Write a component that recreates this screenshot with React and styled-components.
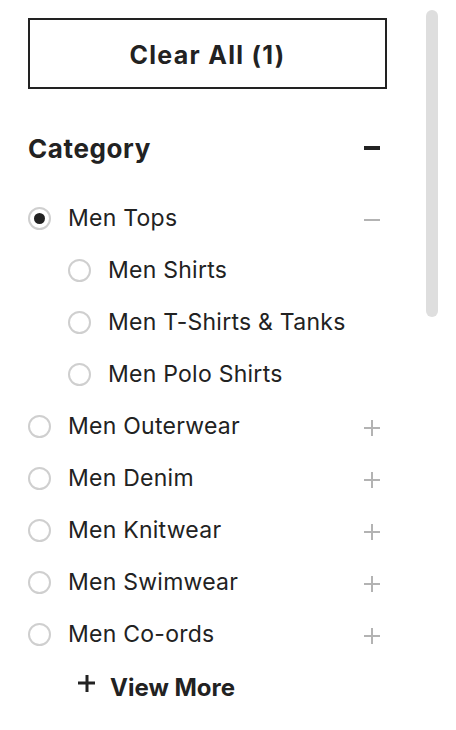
import React from "react";
import styled, { createGlobalStyle } from "styled-components";

const Global = createGlobalStyle`
  html, body { margin: 0; padding: 0; background: #fff; }
  body { font-family: "Inter", "Noto Sans", sans-serif; color: #222; }
`;

const Page = styled.div`
  display: flex;
  align-items: flex-start;
  padding-left: 28px;
  width: 456px;
  height: 730px;
  box-sizing: border-box;
  overflow: hidden;
`;

const Panel = styled.div`
  width: 359px;
  display: flex;
  flex-direction: column;
  padding-top: 18px;
`;

const ScrollThumb = styled.div`
  width: 12px;
  height: 307px;
  margin-top: 10px;
  margin-left: 39px;
  border-radius: 6px;
  background: #dedede;
`;

const ClearButton = styled.button`
  height: 71px;
  width: 100%;
  box-sizing: border-box;
  border: 2px solid #222;
  background: #fff;
  font-family: inherit;
  font-weight: 700;
  font-size: 25px;
  letter-spacing: 1.3px;
  color: #222;
  cursor: pointer;
  padding: 3px 0 0;
`;

const Header = styled.div`
  display: flex;
  align-items: center;
  justify-content: space-between;
  height: 52px;
  margin-top: 33px;
  margin-bottom: 18px;
`;

const HeaderTitle = styled.h2`
  margin: 0;
  font-size: 26px;
  font-weight: 700;
  letter-spacing: 0.6px;
  color: #222;
`;

const Row = styled.div`
  display: flex;
  align-items: center;
  height: 52px;
  padding-left: ${(p) => (p.$sub ? 40 : 0)}px;
`;

const Radio = styled.span`
  width: 23px;
  height: 23px;
  box-sizing: border-box;
  border-radius: 50%;
  border: 2px solid #cfcfcf;
  display: flex;
  align-items: center;
  justify-content: center;
  flex-shrink: 0;
  &::after {
    content: "";
    width: 11px;
    height: 11px;
    border-radius: 50%;
    background: ${(p) => (p.$checked ? "#222" : "transparent")};
  }
`;

const Label = styled.span`
  flex: 1;
  margin-left: 17px;
  font-size: 23px;
  letter-spacing: 0.25px;
  color: #222;
`;

const Toggle = styled.span`
  position: relative;
  width: ${(p) => p.$size || 16}px;
  height: ${(p) => p.$size || 16}px;
  margin-right: ${(p) => (p.$right === undefined ? 7 : p.$right)}px;
  margin-top: ${(p) => p.$offset || 0}px;
  flex-shrink: 0;
  &::before, &::after {
    content: "";
    position: absolute;
    background: ${(p) => p.$color};
  }
  &::before {
    left: 0;
    right: 0;
    top: 50%;
    height: ${(p) => p.$thick}px;
    transform: translateY(-50%);
  }
  &::after {
    display: ${(p) => (p.$plus ? "block" : "none")};
    top: 0;
    bottom: 0;
    left: 50%;
    width: ${(p) => p.$thick}px;
    transform: translateX(-50%);
  }
`;

const ViewMore = styled.button`
  display: flex;
  align-items: center;
  gap: 15px;
  margin-top: 2px;
  margin-left: 50px;
  height: 50px;
  border: none;
  background: none;
  padding: 0;
  font-family: inherit;
  font-size: 24px;
  font-weight: 700;
  color: #222;
  cursor: pointer;
`;

const items = [
  { label: "Men Tops", checked: true, toggle: "minus" },
  { label: "Men Shirts", sub: true },
  { label: "Men T-Shirts & Tanks", sub: true },
  { label: "Men Polo Shirts", sub: true },
  { label: "Men Outerwear", toggle: "plus" },
  { label: "Men Denim", toggle: "plus" },
  { label: "Men Knitwear", toggle: "plus" },
  { label: "Men Swimwear", toggle: "plus" },
  { label: "Men Co-ords", toggle: "plus" },
];

export default function App() {
  return (
    <>
      <Global />
      <Page>
        <Panel>
          <ClearButton>Clear All (1)</ClearButton>
          <Header>
            <HeaderTitle>Category</HeaderTitle>
            <Toggle $color="#222" $thick={4} />
          </Header>
          {items.map((it) => (
            <Row key={it.label} $sub={it.sub}>
              <Radio $checked={it.checked} />
              <Label>{it.label}</Label>
              {it.toggle && (
                <Toggle
                  $color="#b3b3b3"
                  $thick={2}
                  $plus={it.toggle === "plus"}
                  $offset={4}
                />
              )}
            </Row>
          ))}
          <ViewMore>
            <Toggle $color="#222" $thick={3} $size={17} $right={0} $offset={-8} $plus />
            View More
          </ViewMore>
        </Panel>
        <ScrollThumb />
      </Page>
    </>
  );
}
